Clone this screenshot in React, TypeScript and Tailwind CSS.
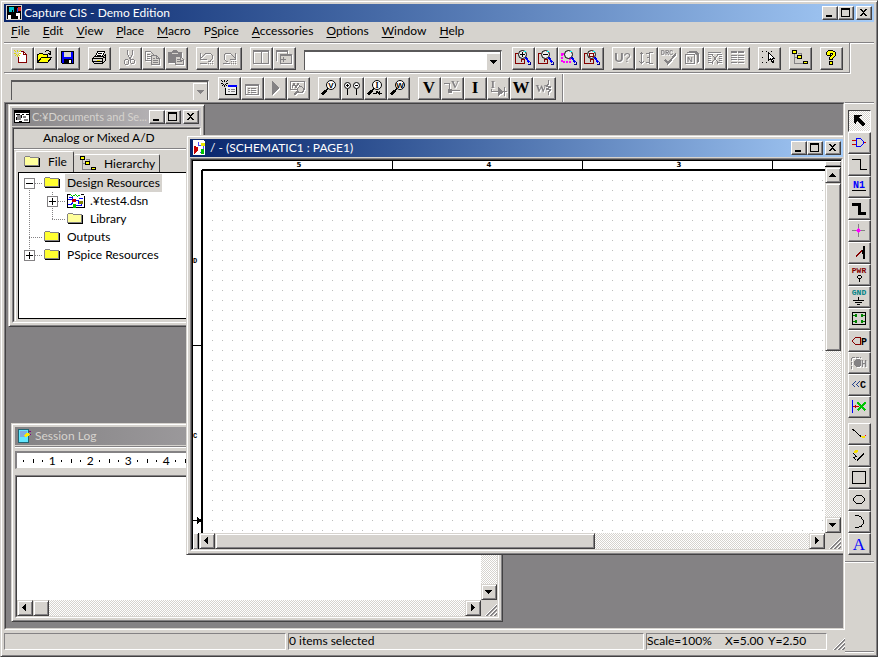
import type { ReactNode } from "react";
import clsx from "clsx";

// Shared bevels
const FRAME =
  "border border-t-[#d6d3ce] border-l-[#d6d3ce] border-r-[#424142] border-b-[#424142] shadow-[inset_1px_1px_0_#fff,inset_-1px_-1px_0_#848284] bg-[#d6d3ce]";
const RAISED =
  "border border-t-white border-l-white border-r-[#424142] border-b-[#424142] shadow-[inset_-1px_-1px_0_#848284] bg-[#d6d3ce]";
const TRACK = "bg-[repeating-conic-gradient(#fff_0_25%,#d6d3ce_0_50%)] bg-[length:2px_2px]";

const G = "#848284";
const RED = "#840000";

function Sunken({ className, children }: { className?: string; children: ReactNode }) {
  return (
    <div className={clsx("flex border border-t-[#848284] border-l-[#848284] border-r-white border-b-white", className)}>
      <div className="flex min-w-0 flex-1 flex-col border border-t-[#424142] border-l-[#424142] border-r-[#d6d3ce] border-b-[#d6d3ce]">
        {children}
      </div>
    </div>
  );
}

/* ---------- icons ---------- */

function Icon({ off, children }: { off?: boolean; children: ReactNode }) {
  return (
    <svg
      viewBox="0 0 16 16"
      fill="none"
      stroke={off ? G : "#000"}
      shapeRendering="crispEdges"
      aria-hidden="true"
      className={clsx("size-4 shrink-0 overflow-visible", off && "drop-shadow-[1px_1px_0_#fff]")}>
      {children}
    </svg>
  );
}

const FACES = {
  sans: "font-['Liberation_Sans',sans-serif]",
  serif: "font-['Liberation_Serif',serif]",
  mono: "font-['Liberation_Mono',monospace]",
};

interface GlyphProps {
  x: number;
  y: number;
  size: number;
  fill?: string;
  face?: keyof typeof FACES;
  bold?: boolean;
  children: string;
}

function Glyph({ x, y, size, fill = "#000", face = "sans", bold = true, children }: GlyphProps) {
  return (
    <text
      x={x}
      y={y}
      fontSize={size}
      fill={fill}
      stroke="none"
      textAnchor="middle"
      fontWeight={bold ? 700 : 400}
      className={FACES[face]}>
      {children}
    </text>
  );
}

const Star = ({ color = "#ded700" }: { color?: string }) => (
  <path d="M3.5 0v2M3.5 5v2M0 3.5h2M5 3.5h2M0.5 0.5l2 2M6.5 0.5l-2 2M0.5 6.5l2-2M6.5 6.5l-2-2" stroke={color} />
);

const NewIcon = () => (
  <Icon>
    <path d="M4.5 12.5v-11h5l3 3v8z" fill="#fff" stroke="none" />
    <path d="M7 1.5h3M12.5 4v9M4 12.5h9M4.5 7v6M9.5 1v4M9 4.5h4M10.5 2v1M11.5 3v1" stroke={RED} />
    <Star />
  </Icon>
);
const OpenIcon = () => (
  <Icon>
    <path d="M0.5 12.5v-8h1l1-1h3l1 1h4v4" fill="#ffff00" />
    <path d="M0.5 12.5l4-5h10l-4 5z" fill="#ffff00" />
    <path d="M8 1.5h1M9 0.5h3M12 1.5h1M13.5 1v4M11 3.5h3M12 4.5h2" />
  </Icon>
);
const SaveIcon = () => (
  <Icon>
    <path d="M1.5 1.5h12v12h-11l-1-1z" fill="#0000ff" />
    <path d="M4 2h7v5h-7z" fill="#d6d3ce" stroke="none" />
    <path d="M4 9h8v5h-8z" fill="#000" stroke="none" />
    <path d="M9 10h2v3h-2z" fill="#fff" stroke="none" />
  </Icon>
);
const PrintIcon = () => (
  <Icon>
    <path d="M4.5 6.5l2-5h7l-2 5" fill="#fff" />
    <path d="M7 3.5h4M6 5.5h4" />
    <path d="M1.5 8.5l2-2h9l2-2v6l-3 3h-8l-2-2z" fill="#d6d3ce" />
    <path d="M1.5 8.5h10v5M11.5 8.5l3-2M2 11.5h9" />
    <path d="M6 10.5h3" stroke="#ded700" />
  </Icon>
);
const CutIcon = () => (
  <Icon off>
    <path d="M5.5 0v4l1 2 2 3M10.5 0v4l-1 2-2 3M3.5 9.5h2l1 1v3l-1 1h-2l-1-1v-3zM9.5 9.5h2l1 1v2l-1 1h-2l-1-1v-3z" />
  </Icon>
);
const CopyIcon = () => (
  <Icon off>
    <path d="M0.5 1.5h5l3 3v6h-8zM2 4.5h3M2 6.5h4M2 8.5h3" />
    <path d="M6.5 5.5h5l3 3v6h-8z" fill="#d6d3ce" />
    <path d="M11.5 5.5v3h3M8 8.5h2M8 10.5h5M8 12.5h5" />
  </Icon>
);
const PasteIcon = () => (
  <Icon off>
    <path d="M0 2h4l1-2h4l1 2h4v11h-14z" fill={G} stroke="none" />
    <path d="M4 3.5h6" stroke="#d6d3ce" />
    <path d="M7.5 6.5h5l3 3v5h-8z" fill="#d6d3ce" />
    <path d="M9 9.5h3M9 11.5h5M12.5 7v3h3" />
  </Icon>
);
const UndoIcon = ({ flip }: { flip?: boolean }) => (
  <Icon off>
    <g transform={flip ? "translate(15 0) scale(-1 1)" : undefined}>
      <path d="M1.5 3v6h6M2 8l4-4 2-1h3l2 2v4l-2 2h-2" />
    </g>
    <path d="M1 13.5h7M9 13.5h1M11 13.5h1M13 13.5h1M9 11.5h1M11 11.5h1M13 11.5h1" />
  </Icon>
);
const SplitIcon = () => (
  <Icon off>
    <path d="M0.5 0.5h15v13h-15zM1 1.5h15M8 1v13" />
  </Icon>
);
const CascadeIcon = () => (
  <Icon off>
    <path d="M0.5 10.5v-10h11v4M1 1.5h11" />
    <path d="M4.5 4.5h11v9h-11zM5 5.5h11M4.5 9.5h5M7.5 7v5" fill="#d6d3ce" />
  </Icon>
);

function ZoomIcon({ kind }: { kind: "in" | "out" | "area" | "all" }) {
  return (
    <Icon>
      {kind === "area" ? (
        <path d="M0.5 3.5h8v8h-8z" stroke="#ff00ff" strokeWidth="2" strokeDasharray="2 1" />
      ) : (
        <path d="M3 3.5h-2.5v10h9v-4h-3v2" stroke={RED} />
      )}
      <circle cx="7.5" cy="4.5" r="4" fill="#efefef" shapeRendering="auto" />
      <path d="M9 1.5h2" stroke="#00ffff" />
      {(kind === "in" || kind === "out") && <path d="M5 4.5h5" />}
      {kind === "in" && <path d="M7.5 2v5" />}
      {kind === "all" && <path d="M5.5 3.5h4v3h-4z" stroke={RED} />}
      <path d="M10.5 7.5l4 5" stroke="#0000ff" strokeWidth="2" />
      <path d="M11 7.5h1M15 12v2h-2" stroke="#000084" />
    </Icon>
  );
}

const AnnotateIcon = () => (
  <Icon off>
    <Glyph x={4} y={12} size={13} fill={G}>U</Glyph>
    <Glyph x={12} y={12} size={13} fill={G} bold={false}>?</Glyph>
  </Icon>
);
const BackAnnotateIcon = () => (
  <Icon off>
    <path d="M3.5 2v12M1.5 4.5l2-2 2 2M1.5 11.5l2 2 2-2M9 7.5h2M15 2.5h-4v11h4M8 3.5h3M8 12.5h3" />
  </Icon>
);
const DrcIcon = () => (
  <Icon off>
    <Glyph x={6} y={5} size={7} fill={G} face="mono">DRC</Glyph>
    <path d="M4 9.5l3 4 8-10" strokeWidth="2" />
  </Icon>
);
const NetlistIcon = () => (
  <Icon off>
    <path d="M5 1.5h7l2 2v8M3 2.5h8l2 2v8M1.5 4.5h9v9h-9z" />
    <Glyph x={6} y={12} size={8} fill={G}>N</Glyph>
  </Icon>
);
const CrossRefIcon = () => (
  <Icon off>
    <path d="M1 2.5h13M1 4.5h4M11 4.5h4M1 6.5h3M12 6.5h3M1 8.5h3M12 8.5h3M1 10.5h3M12 10.5h3M1 12.5h4M11 12.5h4" />
    <path d="M5.5 4v1l5 7v2M10.5 4v1l-5 7v2" />
  </Icon>
);
const BomIcon = () => (
  <Icon off>
    <path d="M1 2h6M8 2h6" strokeWidth="2" />
    <path d="M1 5.5h6M8 5.5h6M1 7.5h6M8 7.5h6M1 9.5h6M8 9.5h6M1 12.5h6M8 12.5h6" />
  </Icon>
);
const SnapIcon = () => (
  <Icon>
    <path d="M1 1.5h1M5 1.5h1M10 1.5h1M1 7.5h1M1 12.5h1M5 12.5h1M12 12.5h1" />
    <path d="M7.5 2.5v8l2-2 2 4 1-1-1-3h2z" fill="#fff" />
  </Icon>
);
const HierarchyIcon = () => (
  <Icon>
    <path d="M2.5 4v9h8M3 7.5h3M6 3.5h3v2" stroke={G} />
    <path d="M0.5 0.5h4v3h-4zM5.5 5.5h4v3h-4zM11.5 11.5h4v2h-4z" fill="#ffff00" />
  </Icon>
);
const HelpIcon = () => (
  <Icon>
    <path d="M3.5 4.5v-2l2-2h4l3 2v3l-3 3v1h-3v-2l3-3v-1h-2v2h-3zM6.5 11.5h3v3h-3z" fill="#ffff00" />
  </Icon>
);

const NewProfileIcon = () => (
  <Icon>
    <path d="M6 14.5h10M15.5 5v10M4.5 8v7M4 14.5h3" />
    <path d="M5 7h10v7h-10z" fill="#efefef" stroke="none" />
    <path d="M7 6h9" stroke="#0000ff" strokeWidth="2" />
    <path d="M7 9.5h2M10 9.5h4M7 11.5h2M10 11.5h4" stroke={G} />
    <Star color="#000" />
  </Icon>
);
const EditProfileIcon = () => (
  <Icon off>
    <path d="M1.5 4.5h13v10h-13zM2 5.5h13M4 8.5h2M7 8.5h5M4 10.5h2M7 10.5h5M4 12.5h2M7 12.5h5" />
  </Icon>
);
const RunIcon = () => (
  <Icon off>
    <path d="M5 1v14l7-7z" fill={G} stroke="none" />
  </Icon>
);
const ResultsIcon = () => (
  <Icon off>
    <path d="M0.5 1.5h14v8h-14zM2 7.5l2-4 2 4 2-4 2 3" />
    <circle cx="10.5" cy="9.5" r="3" fill="#d6d3ce" />
    <path d="M8 11.5l-4 3" strokeWidth="2" />
  </Icon>
);

function ProbeIcon({ letter, wave }: { letter: string; wave?: boolean }) {
  return (
    <Icon>
      <circle cx="10" cy="5" r="4.5" fill="#fff" shapeRendering="auto" />
      <Glyph x={10} y={8} size={8} face={letter === "I" ? "serif" : "sans"}>{letter}</Glyph>
      <path d="M7 8.5l-3 3" strokeWidth="2" />
      <path d="M5 10.5l-4 4" strokeWidth="3" />
      {wave && <path d="M6 13.5h3l1-2 2 2h3M12 11v4" />}
    </Icon>
  );
}
const DiffProbeIcon = () => (
  <Icon>
    <circle cx="3.5" cy="5.5" r="3" fill="#fff" shapeRendering="auto" />
    <circle cx="12.5" cy="5.5" r="3" fill="#fff" shapeRendering="auto" />
    <path d="M2 5.5h3M3.5 4v3M11 5.5h3M3.5 9v6M12.5 9v6" />
  </Icon>
);
const LetterIcon = ({ letter }: { letter: string }) => (
  <Icon>
    <Glyph x={8} y={13} size={17} face="serif">{letter}</Glyph>
  </Icon>
);
const BiasVIcon = () => (
  <Icon off>
    <Glyph x={11} y={8} size={11} fill={G} face="serif">V</Glyph>
    <path d="M0 3.5h5.5v9M5 10.5h11" />
    <path d="M4 9h4v4h-4z" fill={G} stroke="none" />
  </Icon>
);
const BiasIIcon = () => (
  <Icon off>
    <Glyph x={3} y={8} size={11} fill={G} face="serif">I</Glyph>
    <path d="M1.5 9v2.5h15M14.5 7v9" />
    <path d="M8 7v9l6-4z" fill={G} stroke="none" />
  </Icon>
);
const BiasWIcon = () => (
  <Icon off>
    <Glyph x={5} y={12} size={11} fill={G} face="serif">W</Glyph>
    <path d="M12.5 0v4l-2 2 4 1-4 2 4 1-2 2v3" />
  </Icon>
);

/* palette on the right edge */
const SelectIcon = () => (
  <Icon>
    <path d="M3 2h8v1h-2v1h-1v1h1v1h1v1h1v1h1v1h1v1h1v2h-1v1h-2v-1h-1v-1h-1v-1h-1v-1h-1v-1h-1v1h-1v2h-1v-1h-1z" fill="#000" stroke="none" />
  </Icon>
);
const PartIcon = () => (
  <Icon>
    <path d="M1 5.5h4M1 9.5h4M13 7.5h2" stroke="#c60000" />
    <path d="M5.5 3.5h4l3 3v2l-3 3h-4z" stroke="#0000ff" />
  </Icon>
);
const WireIcon = () => (
  <Icon>
    <path d="M1 2.5h8.5v10h6" />
  </Icon>
);
const AliasIcon = () => (
  <Icon>
    <Glyph x={8} y={9} size={10} fill="#0000ff" face="mono">N1</Glyph>
    <path d="M1 11.5h14" />
  </Icon>
);
const BusIcon = () => (
  <Icon>
    <path d="M1 3.5h7.5v9h6.5" strokeWidth="3" />
  </Icon>
);
const JunctionIcon = () => (
  <Icon>
    <path d="M7.5 1v13M1 7.5h13" stroke={G} />
    <path d="M7 5h1v1h1v1h1v1h-1v1h-1v1h-1v-1h-1v-1h-1v-1h1v-1h1z" fill="#ff00ff" stroke="none" />
  </Icon>
);
const BusEntryIcon = () => (
  <Icon>
    <path d="M13 1v13" strokeWidth="2" />
    <path d="M5 11.5l6-6" stroke={RED} />
    <path d="M10.5 6.5l1-1v3" />
  </Icon>
);
const PowerIcon = () => (
  <Icon>
    <Glyph x={8} y={6} size={8} fill={RED} face="mono">PWR</Glyph>
    <path d="M7.5 8.5h2l1 1v1l-1 1h-2l-1-1v-1zM8.5 12v3" />
  </Icon>
);
const GroundIcon = () => (
  <Icon>
    <Glyph x={8} y={6} size={8} fill="#008284" face="mono">GND</Glyph>
    <path d="M7.5 8v3M2 11.5h11M4 13.5h7M6 15.5h3" />
  </Icon>
);
const BlockIcon = () => (
  <Icon>
    <path d="M1.5 1.5h13v12h-13z" />
    <path d="M2 4.5h4M10 4.5h4M2 10.5h4M10 10.5h4" stroke="#008200" />
    <path d="M4 3h2v3h-2zM10 3h2v3h-2zM4 9h2v3h-2zM10 9h2v3h-2z" fill="#008200" stroke="none" />
  </Icon>
);
const PortIcon = () => (
  <Icon>
    <path d="M9.5 4.5h-5l-3 3v1l3 3h5z" stroke={RED} />
    <Glyph x={13} y={12} size={10} face="mono">P</Glyph>
  </Icon>
);
const PinIcon = () => (
  <Icon off>
    <path d="M0.5 14v-12h9M3 8.5h2" strokeDasharray="3 1" />
    <path d="M5 4h3l2 2v4l-2 2h-3l-2-2v-4z" fill={G} stroke="none" />
    <Glyph x={13} y={12} size={10} fill={G} face="mono">H</Glyph>
  </Icon>
);
const OffPageIcon = () => (
  <Icon>
    <path d="M4.5 4.5l-3 3 3 3M8.5 4.5l-3 3 3 3" stroke="#21418c" />
    <Glyph x={12} y={11} size={10} face="mono">C</Glyph>
  </Icon>
);
const NoConnectIcon = () => (
  <Icon>
    <path d="M1.5 1v13" stroke="#0000ff" />
    <path d="M2 7.5h6M4.5 6v3" stroke="#c60000" />
    <path d="M6.5 3.5l8 8M14.5 3.5l-8 8" stroke="#00c300" strokeWidth="2" />
  </Icon>
);
const LineIcon = () => (
  <Icon>
    <path d="M1 3.5h1l8 7" />
    <path d="M10 10.5h4M11 11.5h3" stroke="#f7df00" />
    <path d="M14 9.5h1" stroke="#ff0000" />
  </Icon>
);
const PolylineIcon = () => (
  <Icon>
    <path d="M2.5 5.5l3 3-3 1 3 3M6 12.500l7-7" />
    <path d="M4 2.5h3M3 3.5h3" stroke="#f7df00" strokeWidth="2" />
  </Icon>
);
const RectIcon = () => (
  <Icon>
    <path d="M1.5 1.5h13v12h-13z" />
  </Icon>
);
const EllipseIcon = () => (
  <Icon>
    <path d="M5.5 3.5h5l3 3v2l-3 3h-5l-3-3v-2z" />
  </Icon>
);
const ArcIcon = () => (
  <Icon>
    <path d="M4 1.5h4M8 2.500h2M10.500 3v2M11.500 5v1M12.500 6v4M11.500 10v1M10.500 11v2M8 12.500h2M4 13.500h4" />
  </Icon>
);
const TextIcon = () => (
  <Icon>
    <Glyph x={8} y={14} size={17} fill="#0000ff" face="serif" bold={false}>A</Glyph>
  </Icon>
);

const FolderIcon = ({ open = true }: { open?: boolean }) => (
  <Icon>
    <path d="M0.5 11.5v-8l1-1h4l1 1h8v8z" fill={open ? "#ffff31" : "#ffff9c"} stroke={G} />
    <path d="M1 12.5h14.5v-9" />
  </Icon>
);
const DesignIcon = () => (
  <svg viewBox="0 0 18 16" fill="none" shapeRendering="crispEdges" className="h-4 w-[18px] shrink-0" aria-hidden="true">
    <path d="M0 1h17v14h-17z" fill="#fff" />
    <path d="M0.500 1v14M0 14.500h17M17.500 3v12M0 1.500h3M14 1.500h3" stroke="#000" />
    <path d="M3.500 1.500l2 2 3-2 2 2 3-2" stroke="#00c300" />
    <path d="M1 6.500h4v-2h-3M8 7.500h3v3M1 11.500h3l2-2M9 12.500h5v-2M12 5.500h4" stroke="#0000ff" />
    <path d="M5 6h4v3h-4z" fill="#c60000" />
    <path d="M6 11h3v4h-3z" fill="#00c300" />
    <path d="M12 8h4v3h-4z" fill="#848200" />
  </svg>
);
const PageIcon = () => (
  <Icon>
    <path d="M1 0h10l2 2v13h-12z" fill="#fff" stroke="none" />
    <path d="M2 6l4 1v4l-4 3z" fill="#c60000" stroke="none" />
    <path d="M6.5 2v3h5v5M8 12.5h4" stroke="#4a4aff" />
    <path d="M9 3h4v3h-4z" fill="#e7e700" stroke="none" />
    <path d="M9 9h3v5h-3z" fill="#00c300" stroke="none" />
  </Icon>
);
const ProjectIcon = () => (
  <Icon>
    <path d="M0.5 1.5h15v12h-15z" fill="#fff" />
    <path d="M0 2.5h16" strokeWidth="2" />
    <path d="M3 6h4v5h-4zM9 7h3v2h-3zM10 10h4v2h-4z" fill={G} stroke="none" />
    <path d="M2 5.500h4M8 5.500h2M12 5.500h3M7.500 6v3M2.500 8v3M5 12.500h3" />
  </Icon>
);
const LogIcon = () => (
  <Icon>
    <path d="M1.5 1.5h10v13h-10z" fill="#63e7ff" stroke="#216573" />
    <path d="M3 3h7v6h-7z" fill="#84aade" stroke="none" />
    <path d="M8 8.5l4-3" stroke="#ffeb00" strokeWidth="3" />
    <path d="M12 3.5h2M13 6.5h1" stroke="#840084" />
  </Icon>
);
const AppIcon = () => (
  <Icon>
    <path d="M0.5 0.5h15v14h-15z" fill="#000" stroke="#d6d3ce" />
    <path d="M3 2h5v5h-5z" fill="#00c3ce" stroke="none" />
    <path d="M12 2h3v4h-3z" fill="#de2021" stroke="none" />
    <path d="M2 10h3v4h-3zM10 8h4v6h-2v-3h-2z" fill="#fff" stroke="none" />
    <path d="M11 3h1v4h-1z" fill="#2141de" stroke="none" />
    <path d="M6 5v7l2-1 2 3" fill="#000" />
  </Icon>
);

function Grip() {
  return (
    <svg viewBox="0 0 12 12" className="size-3 self-end" shapeRendering="crispEdges" aria-hidden="true">
      <path d="M0 12L12 0M4 12l8-8M8 12l4-4" stroke="#fff" />
      <path d="M1 12L12 1M2 12L12 2M5 12l7-7M6 12l6-6M9 12l3-3M10 12l2-2" stroke={G} />
    </svg>
  );
}

/* ---------- window chrome ---------- */

const CAPTION_ICONS = {
  Minimize: "M3 8h6v2h-6z",
  Maximize: "M2 1h9v9h-9zM3 3v6h7v-6z",
  Close: "M3 2h2v1h1v1h1v-1h1v-1h2v1h-1v1h-1v1h-1v1h1v1h1v1h1v1h-2v-1h-1v-1h-1v1h-1v1h-2v-1h1v-1h1v-1h1v-1h-1v-1h-1v-1h-1z",
};

function CaptionButton({ name }: { name: keyof typeof CAPTION_ICONS }) {
  return (
    <button aria-label={name} className={clsx(RAISED, "flex h-[14px] w-4 items-center justify-start", name === "Close" && "ml-0.5")}>
      <svg viewBox="0 0 14 12" className="h-3 w-[14px] shrink-0" shapeRendering="crispEdges">
        <path d={CAPTION_ICONS[name]} fillRule="evenodd" />
      </svg>
    </button>
  );
}

interface TitleBarProps {
  title: string;
  icon: ReactNode;
  active?: boolean;
  small?: boolean;
  buttons?: boolean;
}

function TitleBar({ title, icon, active, small, buttons = true }: TitleBarProps) {
  return (
    <div
      className={clsx(
        "flex h-[18px] shrink-0 items-center gap-0.5 bg-linear-to-r pr-0.5 pl-0.5",
        active ? "from-[#08246b] to-[#a5cbf7] text-white" : "from-[#848284] to-[#c6c3c6] text-[#d6d3ce]"
      )}>
      {icon}
      <span className={clsx("min-w-0 flex-1 whitespace-nowrap", small && "text-[11px]")}>{title}</span>
      {buttons && (
        <div className="flex shrink-0">
          <CaptionButton name="Minimize" />
          <CaptionButton name="Maximize" />
          <CaptionButton name="Close" />
        </div>
      )}
    </div>
  );
}

const ARROWS = {
  up: "M4 10h7v-1h-1v-1h-1v-1h-1v-1h-1v1h-1v1h-1v1h-1z",
  down: "M4 6h7v1h-1v1h-1v1h-1v1h-1v-1h-1v-1h-1v-1h-1z",
  left: "M9 4v7h-1v-1h-1v-1h-1v-1h-1v-1h1v-1h1v-1h1v-1z",
  right: "M6 4v7h1v-1h1v-1h1v-1h1v-1h-1v-1h-1v-1h-1v-1z",
};

function Arrow({ dir, color = "#000" }: { dir: keyof typeof ARROWS; color?: string }) {
  return (
    <svg viewBox="1 1 13 13" className="size-[13px] shrink-0" shapeRendering="crispEdges" aria-hidden="true">
      <path d={ARROWS[dir]} fill={color} />
    </svg>
  );
}

function ScrollButton({ dir }: { dir: keyof typeof ARROWS }) {
  return (
    <button aria-label={`Scroll ${dir}`} className={clsx(FRAME, "flex size-4 shrink-0 items-center justify-center pr-px pb-px")}>
      <Arrow dir={dir} />
    </button>
  );
}

/* ---------- toolbars ---------- */

interface Tool {
  label: string;
  icon: ReactNode;
  off?: boolean;
}

function ToolGroup({ tools }: { tools: Tool[] }) {
  return (
    <div className="flex">
      {tools.map(({ label, icon, off }) => (
        <button
          key={label}
          aria-label={label}
          disabled={off}
          className={clsx(RAISED, "flex size-[23px] items-center justify-center pr-px pb-px")}>
          {icon}
        </button>
      ))}
    </div>
  );
}

function Combo({ label, off }: { label: string; off?: boolean }) {
  return (
    <div
      className={clsx(
        "relative mt-[3px] flex h-5 w-[198px] border-x border-t-2 border-t-[#5a595a] border-l-[#5a595a] border-r-white",
        off ? "mr-px" : "mr-0.5"
      )}>
      <select
        aria-label={label}
        disabled={off}
        className={clsx("w-full appearance-none border-r border-[#5a595a] px-1 outline-none", off ? "bg-[#d6d3ce]" : "bg-white")}
      />
      <span className="pointer-events-none absolute top-px right-px bottom-0 flex w-[14px] items-center justify-center border-t border-l border-white bg-[#d6d3ce] pb-0.5">
        <Arrow dir="down" color={off ? G : "#000"} />
      </span>
    </div>
  );
}

const FILE_TOOLS: Tool[][] = [
  [
    { label: "New", icon: <NewIcon /> },
    { label: "Open", icon: <OpenIcon /> },
    { label: "Save", icon: <SaveIcon /> },
  ],
  [{ label: "Print", icon: <PrintIcon /> }],
  [
    { label: "Cut", icon: <CutIcon />, off: true },
    { label: "Copy", icon: <CopyIcon />, off: true },
    { label: "Paste", icon: <PasteIcon />, off: true },
  ],
  [
    { label: "Undo", icon: <UndoIcon />, off: true },
    { label: "Redo", icon: <UndoIcon flip />, off: true },
  ],
  [
    { label: "Tile windows", icon: <SplitIcon />, off: true },
    { label: "Cascade windows", icon: <CascadeIcon />, off: true },
  ],
];

const VIEW_TOOLS: Tool[][] = [
  [
    { label: "Zoom in", icon: <ZoomIcon kind="in" /> },
    { label: "Zoom out", icon: <ZoomIcon kind="out" /> },
    { label: "Zoom to area", icon: <ZoomIcon kind="area" /> },
    { label: "Zoom to all", icon: <ZoomIcon kind="all" /> },
  ],
  [
    { label: "Annotate", icon: <AnnotateIcon />, off: true },
    { label: "Back annotate", icon: <BackAnnotateIcon />, off: true },
    { label: "Design rules check", icon: <DrcIcon />, off: true },
    { label: "Create netlist", icon: <NetlistIcon />, off: true },
    { label: "Cross reference", icon: <CrossRefIcon />, off: true },
    { label: "Bill of materials", icon: <BomIcon />, off: true },
  ],
  [{ label: "Snap to grid", icon: <SnapIcon /> }],
  [{ label: "Project manager", icon: <HierarchyIcon /> }],
  [{ label: "Help topics", icon: <HelpIcon /> }],
];

const PSPICE_TOOLS: Tool[][] = [
  [
    { label: "New simulation profile", icon: <NewProfileIcon /> },
    { label: "Edit simulation profile", icon: <EditProfileIcon />, off: true },
    { label: "Run", icon: <RunIcon />, off: true },
    { label: "View results", icon: <ResultsIcon />, off: true },
  ],
  [
    { label: "Voltage marker", icon: <ProbeIcon letter="V" /> },
    { label: "Differential marker", icon: <DiffProbeIcon /> },
    { label: "Current marker", icon: <ProbeIcon letter="I" wave /> },
    { label: "Power marker", icon: <ProbeIcon letter="W" /> },
  ],
  [
    { label: "Bias voltage", icon: <LetterIcon letter="V" /> },
    { label: "Toggle voltage", icon: <BiasVIcon />, off: true },
    { label: "Bias current", icon: <LetterIcon letter="I" /> },
    { label: "Toggle current", icon: <BiasIIcon />, off: true },
    { label: "Bias power", icon: <LetterIcon letter="W" /> },
    { label: "Toggle power", icon: <BiasWIcon />, off: true },
  ],
];

const PALETTE: Tool[][] = [
  [
    { label: "Select", icon: <SelectIcon /> },
    { label: "Place part", icon: <PartIcon /> },
    { label: "Place wire", icon: <WireIcon /> },
    { label: "Place net alias", icon: <AliasIcon /> },
    { label: "Place bus", icon: <BusIcon /> },
    { label: "Place junction", icon: <JunctionIcon /> },
    { label: "Place bus entry", icon: <BusEntryIcon /> },
    { label: "Place power", icon: <PowerIcon /> },
    { label: "Place ground", icon: <GroundIcon /> },
    { label: "Place hierarchical block", icon: <BlockIcon /> },
    { label: "Place port", icon: <PortIcon /> },
    { label: "Place pin", icon: <PinIcon />, off: true },
    { label: "Place off-page connector", icon: <OffPageIcon /> },
    { label: "Place no connect", icon: <NoConnectIcon /> },
  ],
  [
    { label: "Place line", icon: <LineIcon /> },
    { label: "Place polyline", icon: <PolylineIcon /> },
    { label: "Place rectangle", icon: <RectIcon /> },
    { label: "Place ellipse", icon: <EllipseIcon /> },
    { label: "Place arc", icon: <ArcIcon /> },
    { label: "Place text", icon: <TextIcon /> },
  ],
];

// [before, mnemonic, after]
const MENUS = [
  ["", "F", "ile"],
  ["", "E", "dit"],
  ["", "V", "iew"],
  ["", "P", "lace"],
  ["", "M", "acro"],
  ["P", "S", "pice"],
  ["", "A", "ccessories"],
  ["", "O", "ptions"],
  ["", "W", "indow"],
  ["", "H", "elp"],
];

/* ---------- MDI windows ---------- */

interface BranchProps {
  wide?: boolean;
  box?: "plus" | "minus";
  up?: boolean;
  down?: boolean;
  stub?: boolean;
}

// One 18px cell of the tree's dotted connector lines
function Branch({ wide, box, up, down, stub }: BranchProps) {
  const x = wide ? 10 : 8;
  const w = wide ? 25 : 23;
  return (
    <svg width={w} height={18} fill="none" shapeRendering="crispEdges" className="shrink-0" aria-hidden="true">
      <g stroke={G} strokeDasharray="1 1">
        {up && <path d={`M${x + 0.5} 0v9`} />}
        {down && <path d={`M${x + 0.5} 10v8`} />}
        {stub && <path d={`M${x} 9.5h${w - x - 1}`} />}
      </g>
      {box && (
        <>
          <rect x={x - 4.5} y={4.5} width={10} height={10} fill="#fff" stroke={G} />
          <path d={`M${x - 3} 9.5h7`} stroke="#000" />
          {box === "plus" && <path d={`M${x + 0.5} 6v7`} stroke="#000" />}
        </>
      )}
    </svg>
  );
}

function ProjectTree() {
  return (
    <ul className="flex-1 bg-white pt-px">
      <li className="flex h-[18px] items-center">
        <Branch wide box="minus" down stub />
        <FolderIcon />
        <span className="ml-[5px] bg-[#d6d3ce] px-0.5 leading-[18px]">Design Resources</span>
      </li>
      <li className="flex h-[18px] items-center">
        <Branch wide up down />
        <Branch box="plus" up down stub />
        <DesignIcon />
        <span className="ml-[5px]">.¥test4.dsn</span>
      </li>
      <li className="flex h-[18px] items-center">
        <Branch wide up down />
        <Branch up stub />
        <FolderIcon open={false} />
        <span className="ml-[7px]">Library</span>
      </li>
      <li className="flex h-[18px] items-center">
        <Branch wide up down stub />
        <FolderIcon />
        <span className="ml-[7px]">Outputs</span>
      </li>
      <li className="flex h-[18px] items-center">
        <Branch wide box="plus" up stub />
        <FolderIcon />
        <span className="ml-[7px]">PSpice Resources</span>
      </li>
    </ul>
  );
}

function ProjectWindow() {
  return (
    <section className={clsx(FRAME, "absolute top-0 left-0.5 flex h-[223px] w-[197px] flex-col p-[3px]")}>
      <TitleBar title="C:¥Documents and Se..." icon={<ProjectIcon />} small />
      <Sunken className="mt-px flex-1">
        <p className="h-5 border-b border-[#848284] pl-[29px] leading-[18px]">Analog or Mixed A/D</p>
        <div className="flex flex-1 flex-col border-t border-white pt-px pl-px">
          <div role="tablist" className="flex h-[21px] items-end">
            <button
              role="tab"
              aria-selected="true"
              className="flex h-[21px] w-[59px] items-center gap-2 rounded-t-[2px] border-t border-r border-l border-t-white border-r-[#424142] border-l-white pl-2">
              <FolderIcon open={false} />
              File
            </button>
            <button
              role="tab"
              aria-selected="false"
              className="flex h-[18px] w-[86px] items-center gap-2 rounded-t-[2px] border-t border-r border-t-white border-r-[#424142] pl-[6px]">
              <HierarchyIcon />
              Hierarchy
            </button>
          </div>
          <div className="flex flex-1 border-l border-white pb-0.5 pl-0.5">
            <div className="flex flex-1 border-t border-b border-l border-black">
              <ProjectTree />
            </div>
          </div>
        </div>
      </Sunken>
    </section>
  );
}

function SessionLog() {
  return (
    <section className={clsx(FRAME, "absolute top-[319px] left-[5px] flex h-[199px] w-[492px] flex-col p-[3px]")}>
      <TitleBar title="Session Log" icon={<LogIcon />} buttons={false} />
      <div className="mt-px h-0.5 border-t border-b border-t-[#848284] border-b-white" />
      <div className="mt-[3px] flex h-[18px] shrink-0 overflow-hidden border-t-2 border-b border-l-2 border-t-[#848284] border-b-[#d6d3ce] border-l-[#848284] bg-white pl-0.5">
        {Array.from({ length: 12 }, (_, i) => (
          <div key={i} className="grid w-[38px] shrink-0 grid-cols-4 items-center justify-items-center leading-[15px]">
            <i className="h-0.5 w-px bg-black" />
            <i className="h-1 w-px bg-black" />
            <i className="h-0.5 w-px bg-black" />
            <span>{i + 1}</span>
          </div>
        ))}
      </div>
      <Sunken className="mt-1.5 flex-1">
        <div className="flex flex-1">
          <textarea aria-label="Session log" className="flex-1 resize-none bg-white outline-none" />
          <div className={clsx(TRACK, "flex w-4 flex-col justify-end")}>
            <ScrollButton dir="down" />
          </div>
        </div>
        <div className="flex h-4">
          <ScrollButton dir="left" />
          <div className={clsx(TRACK, "flex flex-1")}>
            <div className={clsx(FRAME, "w-4")} />
          </div>
          <ScrollButton dir="right" />
          <div className="flex w-4 justify-end">
            <Grip />
          </div>
        </div>
      </Sunken>
    </section>
  );
}

const COLUMNS = [
  { label: "5", x: 107 },
  { label: "4", x: 297 },
  { label: "3", x: 487 },
];

function SchematicCanvas() {
  return (
    <svg className="min-w-0 flex-1 bg-white" shapeRendering="crispEdges" role="img" aria-label="Schematic page">
      <defs>
        <pattern id="grid" width="10" height="10" patternUnits="userSpaceOnUse">
          <rect width="1" height="1" fill="#bdbebd" />
        </pattern>
      </defs>
      <rect x="12" y="12" width="100%" height="100%" fill="url(#grid)" />
      <rect width="100%" height="1" />
      <rect width="1" height="100%" />
      <rect x="10" y="9" width="100%" height="2" />
      <rect x="9" y="10" width="2" height="100%" />
      {COLUMNS.map(({ label, x }) => (
        <g key={label}>
          <text x={x} y="7" fontSize="7" fontWeight="700" textAnchor="middle" className="font-['DejaVu_Sans',sans-serif]">
            {label}
          </text>
          <rect x={x + 93} y="1" width="1" height="8" />
        </g>
      ))}
      <g fontSize="7" fontWeight="700" className="font-['Liberation_Mono',monospace]">
        <text x="1" y="103">D</text>
        <text x="1" y="278">C</text>
      </g>
      <rect x="1" y="185" width="8" height="1" />
      <path d="M1 360h4v-3l5 3v1l-5 3v-3h-4z" />
    </svg>
  );
}

function SchematicWindow() {
  return (
    <section className={clsx(FRAME, "absolute top-[31px] left-[180px] flex h-[420px] w-[661px] flex-col p-[3px]")}>
      <TitleBar title="/ - (SCHEMATIC1 : PAGE1)" icon={<PageIcon />} active />
      <Sunken className="mt-px flex-1">
        <div className="flex flex-1">
          <SchematicCanvas />
          <div className={clsx(TRACK, "flex w-4 flex-col")}>
            <div className="h-[7px] border-y border-black bg-[#d6d3ce] shadow-[inset_1px_1px_0_#fff,inset_-1px_-1px_0_#848284]" />
            <ScrollButton dir="up" />
            <div className={clsx(FRAME, "h-[168px]")} />
            <div className="flex-1" />
            <ScrollButton dir="down" />
          </div>
        </div>
        <div className="flex h-4">
          <div className="w-[7px] border-x border-black bg-[#d6d3ce] shadow-[inset_1px_1px_0_#fff,inset_-1px_-1px_0_#848284]" />
          <ScrollButton dir="left" />
          <div className={clsx(TRACK, "flex flex-1")}>
            <div className={clsx(FRAME, "w-[380px]")} />
          </div>
          <ScrollButton dir="right" />
          <div className="flex w-4 justify-end">
            <Grip />
          </div>
        </div>
      </Sunken>
    </section>
  );
}

const PANE = "h-[17px] border border-t-[#848284] border-l-[#848284] border-r-white border-b-white leading-[14px] whitespace-pre";

export default function App() {
  return (
    <div className={clsx(FRAME, "flex min-h-screen flex-col p-[3px] font-[Lato,'Noto_Sans_CJK_JP',sans-serif] text-xs text-black")}>
      <TitleBar title="Capture CIS - Demo Edition" icon={<AppIcon />} active />

      {/* Menu */}
      <nav className="flex h-5 items-center gap-[13px] pb-0.5 pl-[7px]">
        {MENUS.map(([before, key, after]) => (
          <button key={key + after}>
            {before}
            <span className="underline underline-offset-2">{key}</span>
            {after}
          </button>
        ))}
      </nav>

      {/* Toolbars */}
      <div className="flex flex-col items-start border-t border-[#848284] shadow-[inset_0_1px_0_#fff]">
        <div className="mb-px flex gap-2 border-r border-b border-[#848284] pt-1 pr-1.5 pb-0.5 pl-[7px] shadow-[1px_1px_0_#fff]">
          {FILE_TOOLS.map((tools) => (
            <ToolGroup key={tools[0].label} tools={tools} />
          ))}
          <Combo label="Part" />
          {VIEW_TOOLS.map((tools) => (
            <ToolGroup key={tools[0].label} tools={tools} />
          ))}
        </div>
        <div className="flex gap-2 border-r border-[#848284] pt-[3px] pr-1.5 pb-0.5 pl-[7px] shadow-[1px_0_0_#fff]">
          <Combo label="Simulation profile" off />
          {PSPICE_TOOLS.map((tools) => (
            <ToolGroup key={tools[0].label} tools={tools} />
          ))}
        </div>
      </div>

      <div className="flex flex-1">
        <div className="flex min-w-0 flex-1 flex-col">
          <Sunken className="flex-1">
            <main className="relative min-h-[520px] flex-1 overflow-hidden bg-[#848284]">
              <ProjectWindow />
              <SessionLog />
              <SchematicWindow />
            </main>
          </Sunken>

          {/* Status bar */}
          <footer className="flex gap-0.5 pt-[3px] pb-[3px]">
            <div className={clsx(PANE, "w-[282px]")} />
            <div className={clsx(PANE, "flex-1")}>0 items selected</div>
            <div className={clsx(PANE, "flex w-[181px]")}>
              <span className="w-[78px]">Scale=100%</span>
              <span className="w-[43px]">X=5.00</span>
              <span>Y=2.50</span>
            </div>
            <div className="flex w-4 justify-end">
              <Grip />
            </div>
          </footer>
        </div>

        {/* Palette */}
        <aside className="flex w-[29px] flex-col border-y border-t-[#848284] border-b-white">
          <div className="flex flex-col gap-[5px] border-t border-b border-t-white border-b-[#848284] pt-1.5 pb-1.5 pl-[3px] shadow-[0_1px_0_#fff]">
            {PALETTE.map((tools, group) => (
              <div key={group} className="flex flex-col">
                {tools.map(({ label, icon, off }) => (
                  <button
                    key={label}
                    aria-label={label}
                    disabled={off}
                    className={clsx(
                      "flex h-[22px] w-[23px] items-center justify-center pr-px",
                      label === "Select"
                        ? ["border border-t-[#424142] border-l-[#424142] border-r-white border-b-white", TRACK]
                        : RAISED
                    )}>
                    {icon}
                  </button>
                ))}
              </div>
            ))}
          </div>
          <div className="flex-1 border-b border-[#848284]" />
        </aside>
      </div>
    </div>
  );
}
